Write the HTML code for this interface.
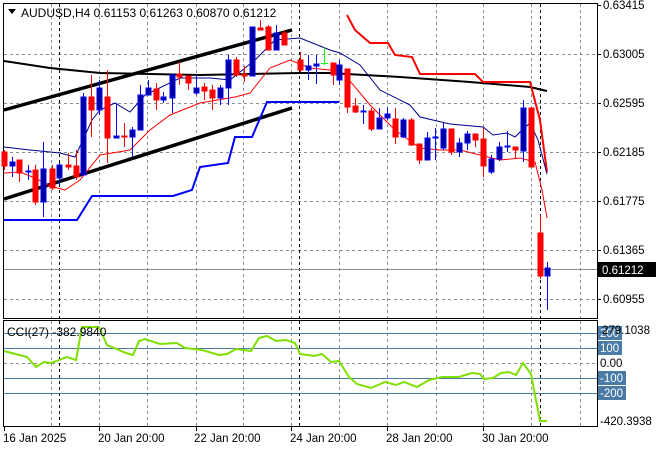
<!DOCTYPE html>
<html><head><meta charset="utf-8"><style>
html,body{margin:0;padding:0;background:#fff;}
svg{display:block;font-family:"Liberation Sans",sans-serif;}
</style></head><body>
<svg width="660" height="450" viewBox="0 0 660 450" xmlns="http://www.w3.org/2000/svg">
<rect width="660" height="450" fill="#fff"/>
<!-- grid -->
<g stroke="#8a8f96" stroke-width="1" stroke-dasharray="3,3" fill="none">
<path d="M4 54.5H597M4 103.5H597M4 152.5H597M4 201.5H597M4 250.5H597M4 299.5H597"/>
<path d="M51.5 4V318M99.5 4V318M147.5 4V318M196.5 4V318M243.5 4V318M291.5 4V318M339.5 4V318M387.5 4V318M436.5 4V318M483.5 4V318M531.5 4V318M580.5 4V318"/>
<path d="M51.5 321V426M99.5 321V426M147.5 321V426M196.5 321V426M243.5 321V426M291.5 321V426M339.5 321V426M387.5 321V426M436.5 321V426M483.5 321V426M531.5 321V426M580.5 321V426"/>
<path d="M4 363.5H597"/>
</g>
<g stroke="#000" stroke-width="1" stroke-dasharray="3,3" fill="none">
<path d="M59.5 4V318M299.5 4V318M540.5 4V318M59.5 321V426M299.5 321V426M540.5 321V426"/>
</g>
<path d="M4 269.5H597" stroke="#8a8f96"/>
<g stroke="#4a7aa6" stroke-width="1">
<path d="M4 333.5H597M4 348.5H597M4 378.5H597M4 393.5H597"/>
</g>
<!-- frames -->
<rect x="3.5" y="3.5" width="594" height="315" fill="none" stroke="#000"/>
<rect x="3.5" y="320.5" width="594" height="106" fill="none" stroke="#000"/>
<!-- black MA -->
<polyline fill="none" stroke="#000" stroke-width="2" points="4,61 50,68 100,73 150,74 200,75 250,74 300,73 330,73 400,77 470,82 530,87 547,91"/>
<!-- channel -->
<path d="M4 110L292 30M4 199L292 108" stroke="#000" stroke-width="3.5" fill="none"/>
<!-- blue step -->
<polyline fill="none" stroke="#0000ff" stroke-width="2" points="4,220 77,220 92,196 173,196 192,190 200,167 228,163 235,137 252,137 267,102 339,102"/>
<!-- red thick -->
<polyline fill="none" stroke="#ff0000" stroke-width="2" points="347,15 355,30 370,43 388,43 395,55 412,57 420,74 475,74 483,82 530,82 540,120 547,172"/>
<!-- thin blue MA -->
<polyline fill="none" stroke="#00008b" stroke-width="1" points="4,147 30,150 60,153 75,157 83,140 92,120 100,110 115,103 130,112 145,95 180,78 210,78 230,80 255,60 275,40 300,38 330,50 340,53 360,65 380,90 410,105 420,117 450,124 483,127 493,135 507,133 515,137 522,130 530,123 538,140 547,174"/>
<!-- thin red MA -->
<polyline fill="none" stroke="#ff0000" stroke-width="1" points="4,173 20,172 35,178 50,186 65,190 80,180 100,155 130,150 150,130 170,115 200,103 235,97 250,93 270,68 290,60 310,68 330,70 345,75 370,105 395,130 420,148 440,150 460,150 480,155 500,160 520,158 535,162 542,190 547,218"/>
<!-- candles -->
<g stroke-width="1">
<g stroke="#ff0000" fill="#ff0000">
<path d="M4.5 150V170M19.5 160V182M35.5 165V205M52.5 165V190M68.5 153V170M76.5 150V180M91.5 75V137M107.5 70V163M124.5 123V147M156.5 83V110M179.5 62V85M188.5 76V90M204.5 83V100M212.5 85V110M236.5 57V77M244.5 66V82M260.5 20V30M268.5 25V50M284.5 30V45M300.5 52V72M333.5 63V85M347.5 69V113M355.5 98V113M371.5 108V131M395.5 108V144M411.5 118V146M419.5 144V164M451.5 129V155M475.5 134V147M483.5 128V177M515.5 147V158M531.5 107V167M540.5 215V279"/>
<rect x="2" y="152" width="5" height="14"/><rect x="17" y="160" width="5" height="13"/><rect x="33" y="170" width="5" height="32"/><rect x="50" y="169" width="5" height="19"/><rect x="66" y="165" width="5" height="2"/><rect x="74" y="166" width="5" height="11"/><rect x="89" y="97" width="5" height="13"/><rect x="105" y="97" width="5" height="41"/><rect x="122" y="136" width="5" height="1"/><rect x="154" y="89" width="5" height="11"/><rect x="177" y="74" width="5" height="3"/><rect x="186" y="76" width="5" height="7"/><rect x="202" y="87" width="5" height="4"/><rect x="210" y="90" width="5" height="8"/><rect x="234" y="60" width="5" height="15"/><rect x="242" y="74" width="5" height="2"/><rect x="258" y="28" width="5" height="2"/><rect x="266" y="27" width="5" height="23"/><rect x="282" y="33" width="5" height="12"/><rect x="298" y="60" width="5" height="10"/><rect x="331" y="63" width="5" height="12"/><rect x="345" y="69" width="5" height="38"/><rect x="353" y="106" width="5" height="6"/><rect x="369" y="111" width="5" height="18"/><rect x="393" y="119" width="5" height="18"/><rect x="409" y="120" width="5" height="25"/><rect x="417" y="144" width="5" height="16"/><rect x="449" y="129" width="5" height="23"/><rect x="473" y="134" width="5" height="6"/><rect x="481" y="139" width="5" height="27"/><rect x="513" y="147" width="5" height="3"/><rect x="529" y="108" width="5" height="59"/><rect x="538" y="233" width="5" height="43"/>
</g>
<g stroke="#0000ff" fill="#00009c">
<path d="M12.5 157V177M28.5 165V180M43.5 142V217M59.5 163V185M83.5 93V175M99.5 80V115M116.5 103V138M132.5 127V157M140.5 85V130M148.5 80V95M163.5 92V103M172.5 74V113M196.5 75V95M220.5 85V105M228.5 55V105M252.5 27V76M276.5 25V50M308.5 55V80M316.5 55V84M339.5 60V85M363.5 105V124M379.5 108V129M387.5 108V120M403.5 118V138M427.5 132V160M435.5 128V160M443.5 123V150M459.5 138V157M467.5 131V150M491.5 155V174M499.5 142V161M507.5 131V152M523.5 100V162M547.5 262V310"/>
<rect x="10" y="162" width="5" height="4"/><rect x="26" y="171" width="5" height="1"/><rect x="41" y="169" width="5" height="33"/><rect x="57" y="165" width="5" height="13"/><rect x="81" y="97" width="5" height="78"/><rect x="97" y="88" width="5" height="22"/><rect x="114" y="136" width="5" height="2"/><rect x="130" y="130" width="5" height="7"/><rect x="138" y="95" width="5" height="35"/><rect x="146" y="88" width="5" height="7"/><rect x="161" y="97" width="5" height="3"/><rect x="170" y="75" width="5" height="23"/><rect x="194" y="88" width="5" height="5"/><rect x="218" y="88" width="5" height="10"/><rect x="226" y="60" width="5" height="28"/><rect x="250" y="27" width="5" height="49"/><rect x="274" y="33" width="5" height="17"/><rect x="306" y="66" width="5" height="4"/><rect x="314" y="64" width="5" height="2"/><rect x="337" y="65" width="5" height="15"/><rect x="361" y="111" width="5" height="1"/><rect x="377" y="118" width="5" height="11"/><rect x="385" y="114" width="5" height="4"/><rect x="401" y="120" width="5" height="17"/><rect x="425" y="138" width="5" height="22"/><rect x="433" y="137" width="5" height="1"/><rect x="441" y="129" width="5" height="19"/><rect x="457" y="143" width="5" height="9"/><rect x="465" y="134" width="5" height="9"/><rect x="489" y="159" width="5" height="13"/><rect x="497" y="147" width="5" height="12"/><rect x="505" y="146" width="5" height="1"/><rect x="521" y="108" width="5" height="43"/><rect x="545" y="268" width="5" height="8"/>
</g>
<path d="M324.5 47V65M321 63.5H328" stroke="#00ff00"/>
</g>
<!-- CCI -->
<polyline fill="none" stroke="#7fe000" stroke-width="2" points="4,351 27,357 36,367 44,362 51,363 67,357 76,360 82,327 99,327 107,345 126,353 133,355 139,341 145,339 160,344 177,343 185,348 202,350 219,355 227,354 236,349 251,351 259,338 267,336 276,341 286,340 295,343 300,354 314,356 322,354 331,362 339,361 349,377 357,384 371,388 385,382 396,385 404,382 417,387 429,380 442,377 459,377 472,373 480,374 484,379 493,378 501,373 509,372 516,375 523,363 531,374 540,421 547,421"/>
<!-- text -->
<g font-size="12" fill="#000">
<path d="M8 9H16L12 14Z" fill="#000"/>
<text x="21" y="17">AUDUSD,H4  0.61153 0.61263 0.60870 0.61212</text>
<text x="7" y="336">CCI(27) -382.9840</text>
</g>
<g font-size="11.5" fill="#000">
<path d="M597 5.5H601M597 54.5H601M597 103.5H601M597 152.5H601M597 201.5H601M597 250.5H601M597 299.5H601" stroke="#000"/>
<text x="603" y="9">0.63415</text>
<text x="603" y="58">0.63005</text>
<text x="603" y="107">0.62595</text>
<text x="603" y="156">0.62185</text>
<text x="603" y="205">0.61775</text>
<text x="603" y="254">0.61365</text>
<text x="603" y="303">0.60955</text>
<rect x="598" y="262" width="58" height="15" fill="#000"/>
<text x="602" y="274" fill="#fff">0.61212</text>
<rect x="598" y="326" width="24" height="14" fill="#4a7aa6"/>
<text x="600" y="337" fill="#fff">200</text>
<text x="602" y="334">279.1038</text>
<rect x="598" y="341" width="24" height="14" fill="#4a7aa6"/>
<text x="600" y="352" fill="#fff">100</text>
<text x="600" y="367">0.00</text>
<rect x="598" y="371" width="28" height="14" fill="#4a7aa6"/>
<text x="600" y="382" fill="#fff">-100</text>
<rect x="598" y="386" width="28" height="14" fill="#4a7aa6"/>
<text x="600" y="397" fill="#fff">-200</text>
<text x="600" y="425">-420.3938</text>
<path d="M4.5 427V431M99.5 427V431M196.5 427V431M291.5 427V431M387.5 427V431M483.5 427V431" stroke="#000"/>
<text x="3" y="442">16 Jan 2025</text>
<text x="98" y="442">20 Jan 20:00</text>
<text x="194" y="442">22 Jan 20:00</text>
<text x="290" y="442">24 Jan 20:00</text>
<text x="386" y="442">28 Jan 20:00</text>
<text x="482" y="442">30 Jan 20:00</text>
</g>
</svg>
</body></html>
